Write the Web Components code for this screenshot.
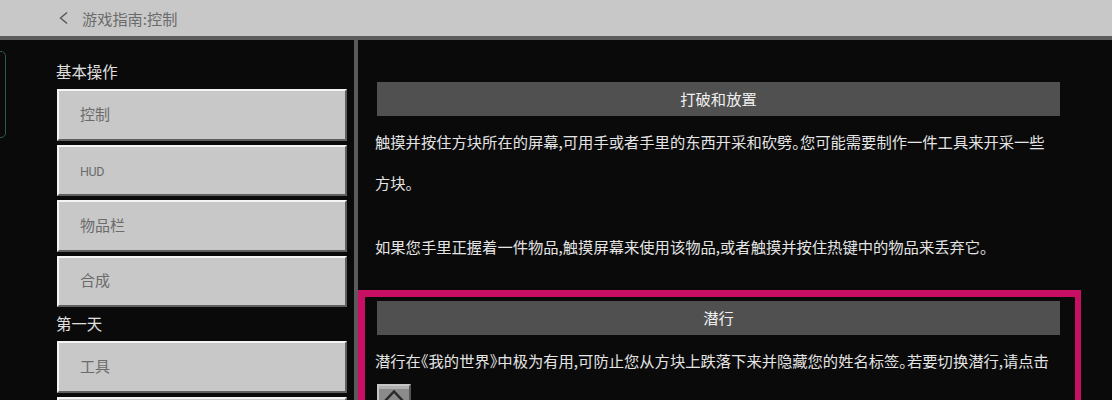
<!DOCTYPE html>
<html lang="zh">
<head>
<meta charset="utf-8">
<title>游戏指南:控制</title>
<style>
    html, body { margin: 0; height: 400px; overflow: hidden; background: #0a0a0a; }
    body { font-family: "Noto Sans CJK SC", "Liberation Sans", sans-serif; }
</style>
</head>
<body>
<guide-screen>
    <guide-topbar slot="top">游戏指南:控制</guide-topbar>

    <guide-sidebar slot="side">
        <guide-group label="基本操作">
            <guide-nav>控制</guide-nav>
            <guide-nav latin>HUD</guide-nav>
            <guide-nav>物品栏</guide-nav>
            <guide-nav>合成</guide-nav>
        </guide-group>
        <guide-group label="第一天">
            <guide-nav>工具</guide-nav>
            <guide-nav></guide-nav>
        </guide-group>
    </guide-sidebar>

    <guide-section slot="main" title="打破和放置">
        <p>触摸并按住方块所在的屏幕,可用手或者手里的东西开采和砍劈。您可能需要制作一件工具来开采一些方块。</p>
        <p class="next">如果您手里正握着一件物品,触摸屏幕来使用该物品,或者触摸并按住热键中的物品来丢弃它。</p>
    </guide-section>
    <guide-section slot="main" title="潜行" selected>
        <p>潜行在《我的世界》中极为有用,可防止您从方块上跌落下来并隐藏您的姓名标签。若要切换潜行,请点击</p>
        <guide-key></guide-key>
    </guide-section>
</guide-screen>

<script>
class GuideScreen extends HTMLElement {
    constructor() {
        super();
        this.attachShadow({ mode: 'open' });
        this.shadowRoot.innerHTML = `
            <style>
                :host {
                    display: grid;
                    grid-template-columns: 354px 1fr;
                    grid-template-rows: 40px 360px;
                    height: 400px;
                    overflow: hidden;
                    background: #0a0a0a;
                }
                .top { grid-column: 1 / 3; }
                .main {
                    border-left: 4px solid #5a5a5a;
                    padding-top: 30px;
                    overflow: hidden;
                }
            </style>
            <div class="top"><slot name="top"></slot></div>
            <slot name="side"></slot>
            <div class="main"><slot name="main"></slot></div>
        `;
    }
}

class GuideTopbar extends HTMLElement {
    constructor() {
        super();
        this.attachShadow({ mode: 'open' });
        this.shadowRoot.innerHTML = `
            <style>
                :host {
                    display: flex;
                    align-items: center;
                    gap: 13px;
                    box-sizing: border-box;
                    height: 40px;
                    padding-left: 58px;
                    background: #c8c8c8;
                    border-bottom: 4px solid #5c5c5c;
                    color: #6b6b6b;
                    font-size: 15.2px;
                }
                svg { width: 11px; height: 14px; flex: none; }
            </style>
            <svg viewBox="0 0 11 14" fill="none" stroke="#555" stroke-width="1.4"><path d="M9 1.5 2.5 7 9 12.5"/></svg>
            <slot></slot>
        `;
    }
}

class GuideSidebar extends HTMLElement {
    constructor() {
        super();
        this.attachShadow({ mode: 'open' });
        this.shadowRoot.innerHTML = `
            <style>
                :host {
                    display: block;
                    position: relative;
                    box-sizing: border-box;
                    height: 360px;
                    padding: 21px 7px 0 57px;
                    overflow: hidden;
                }
                .tab {
                    position: absolute;
                    left: -8px;
                    top: 11px;
                    width: 12px;
                    height: 85px;
                    border: 1px solid #2c5a45;
                    border-radius: 5px;
                }
            </style>
            <div class="tab"></div>
            <slot></slot>
        `;
    }
}

class GuideGroup extends HTMLElement {
    constructor() {
        super();
        this.attachShadow({ mode: 'open' });
        this.shadowRoot.innerHTML = `
            <style>
                :host { display: block; }
                :host(:not(:first-child)) { margin-top: 6px; }
                .label {
                    height: 28px;
                    line-height: 21px;
                    margin-left: -1px;
                    color: #e0e0e0;
                    font-size: 15.4px;
                }
                .list { display: flex; flex-direction: column; gap: 4px; }
            </style>
            <div class="label"></div>
            <div class="list"><slot></slot></div>
        `;
        this.shadowRoot.querySelector('.label').textContent = this.getAttribute('label');
    }
}

class GuideNav extends HTMLElement {
    constructor() {
        super();
        this.attachShadow({ mode: 'open' });
        this.shadowRoot.innerHTML = `
            <style>
                :host {
                    display: flex;
                    align-items: center;
                    box-sizing: border-box;
                    height: 51.5px;
                    padding: 0 0 3px 21px;
                    background: #c8c8c8;
                    border: 2px solid;
                    border-color: #f4f4f4 #5f5f5f #5f5f5f #f4f4f4;
                    color: #6b6b6b;
                    font-size: 15px;
                }
                :host([latin]) {
                    padding-top: 2px;
                    padding-bottom: 0;
                    font-size: 12.5px;
                    letter-spacing: -0.4px;
                    font-family: "Roboto", sans-serif;
                }
            </style>
            <slot></slot>
        `;
    }
}

class GuideSection extends HTMLElement {
    constructor() {
        super();
        this.attachShadow({ mode: 'open' });
        this.shadowRoot.innerHTML = `
            <style>
                :host {
                    display: block;
                    box-sizing: border-box;
                    width: 723px;
                    padding: 6px 15px 0 19px;
                    border: 6px solid transparent;
                    border-left-width: 0;
                    margin-bottom: 17.5px;
                    color: #e4e4e4;
                    font-size: 15.3px;
                    font-feature-settings: "halt";
                }
                :host([selected]) {
                    border-color: #c90f63;
                    border-width: 7px 6px 6px 7px;
                    padding-left: 12px;
                    padding-top: 4px;
                }
                .title {
                    display: flex;
                    align-items: center;
                    justify-content: center;
                    box-sizing: border-box;
                    height: 34px;
                    padding-bottom: 3px;
                    background: #505050;
                    color: #f0f0f0;
                }
                ::slotted(p) {
                    margin: 0 6px 0 -2px;
                    line-height: 41px;
                }
                ::slotted(p.next) { margin-top: 22.5px; }
                .body { padding-top: 5px; }
            </style>
            <div class="title"></div>
            <div class="body"><slot></slot></div>
        `;
        this.shadowRoot.querySelector('.title').textContent = this.getAttribute('title');
    }
}

class GuideKey extends HTMLElement {
    constructor() {
        super();
        this.attachShadow({ mode: 'open' });
        this.shadowRoot.innerHTML = `
            <style>
                :host {
                    display: block;
                    box-sizing: border-box;
                    width: 34px;
                    height: 34px;
                    margin: 3px 0 20px;
                    background: linear-gradient(#b0b0b0 0 3px, #8b8b8b 3px);
                    border: 2px solid;
                    border-color: #c6c6c6 #555 #555 #c6c6c6;
                }
                svg { display: block; width: 100%; }
            </style>
            <svg viewBox="0 0 30 30" fill="none" stroke="#2a2a2a" stroke-width="2.5"><path d="M6 15 15 5.5 24 15"/></svg>
        `;
    }
}

customElements.define('guide-screen', GuideScreen);
customElements.define('guide-topbar', GuideTopbar);
customElements.define('guide-sidebar', GuideSidebar);
customElements.define('guide-group', GuideGroup);
customElements.define('guide-nav', GuideNav);
customElements.define('guide-section', GuideSection);
customElements.define('guide-key', GuideKey);
</script>
</body>
</html>
